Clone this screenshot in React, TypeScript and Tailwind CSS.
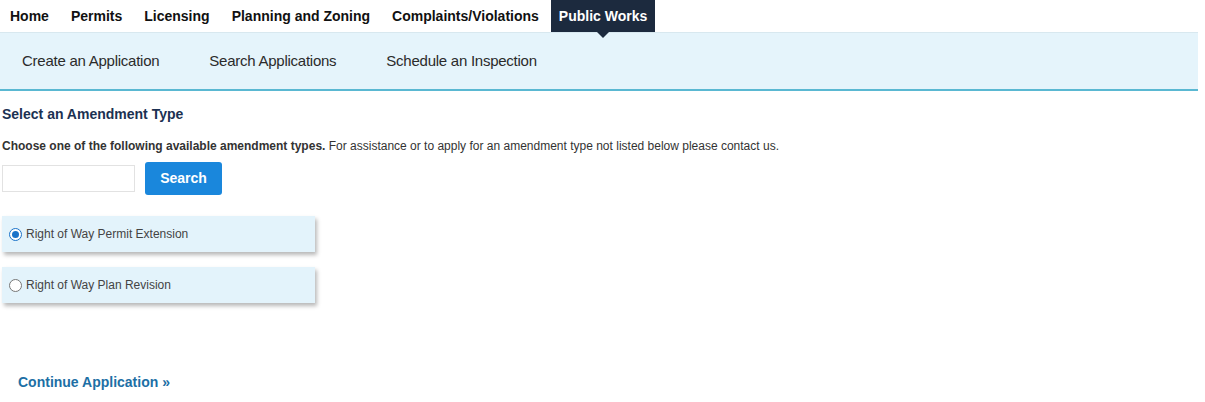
import { useState } from "react";

const topNav = ["Home", "Permits", "Licensing", "Planning and Zoning", "Complaints/Violations", "Public Works"];
const subNav = ["Create an Application", "Search Applications", "Schedule an Inspection"];
const amendments = ["Right of Way Permit Extension", "Right of Way Plan Revision"];

export default function App() {
  const [selected, setSelected] = useState(0);

  return (
    <div className="w-[1205px] h-[402px] overflow-hidden bg-white font-['Liberation_Sans',Arial,sans-serif] text-[#222]">
      {/* TOP NAV */}
      <nav className="flex h-[32px] items-stretch">
        {topNav.map((item) => {
          const active = item === "Public Works";
          return (
            <div
              key={item}
              className={
                active
                  ? "relative flex items-center px-[8px] ml-[1px] bg-[#1c2a3e] text-white text-[14px] font-bold"
                  : "flex items-center px-[11px] first:pl-[10px] text-[#111] text-[14px] font-bold"
              }
            >
              {item}
              {active && (
                <span className="absolute left-1/2 -translate-x-1/2 top-full w-0 h-0 border-l-[6px] border-r-[6px] border-t-[6px] border-l-transparent border-r-transparent border-t-[#1c2a3e] z-10" />
              )}
            </div>
          );
        })}
      </nav>

      {/* SUB NAV */}
      <div className="w-[1198px] h-[59px] flex items-center gap-[50px] pl-[22px] bg-[#e5f4fb] border-t border-[#d8e8ef] border-b-2 border-b-[#5ab8d2]">
        {subNav.map((item) => (
          <span key={item} className="text-[15px] tracking-[-0.25px] text-[#2b2b2b]">
            {item}
          </span>
        ))}
      </div>

      {/* CONTENT */}
      <div className="px-[2px] pt-[14px]">
        <h2 className="text-[14px] font-bold text-[#1b3152] leading-[18px]">Select an Amendment Type</h2>

        <p className="mt-[16px] text-[12px] text-[#333] leading-[14px]">
          <b>Choose one of the following available amendment types.</b> For assistance or to apply for an amendment
          type not listed below please contact us.
        </p>

        <div className="mt-[9px] flex items-center gap-[10px]">
          <input type="text" className="w-[133px] h-[27px] border border-[#e2e2e2] bg-white outline-none" />
          <button className="w-[77px] h-[33px] rounded-[3px] bg-[#1a87dc] text-white text-[14px] font-bold">
            Search
          </button>
        </div>

        <div className="mt-[21px] flex flex-col gap-[15px]">
          {amendments.map((a, i) => (
            <label
              key={a}
              onClick={() => setSelected(i)}
              className="w-[313px] h-[36px] flex items-center gap-[4px] pl-[7px] bg-[#e3f3fb] shadow-[2px_3px_4px_rgba(0,0,0,0.28)] cursor-pointer"
            >
              <span
                className={
                  selected === i
                    ? "w-[13px] h-[13px] rounded-full border border-[#1a73c9] bg-white flex items-center justify-center"
                    : "w-[13px] h-[13px] rounded-full border border-[#777] bg-white"
                }
              >
                {selected === i && <span className="w-[7px] h-[7px] rounded-full bg-[#1a73c9]" />}
              </span>
              <span className="text-[12px] text-[#444]">{a}</span>
            </label>
          ))}
        </div>

        <div className="mt-[67px] pl-[16px]">
          <a className="text-[14px] font-bold text-[#1d6fa5]">Continue Application »</a>
        </div>
      </div>
    </div>
  );
}
